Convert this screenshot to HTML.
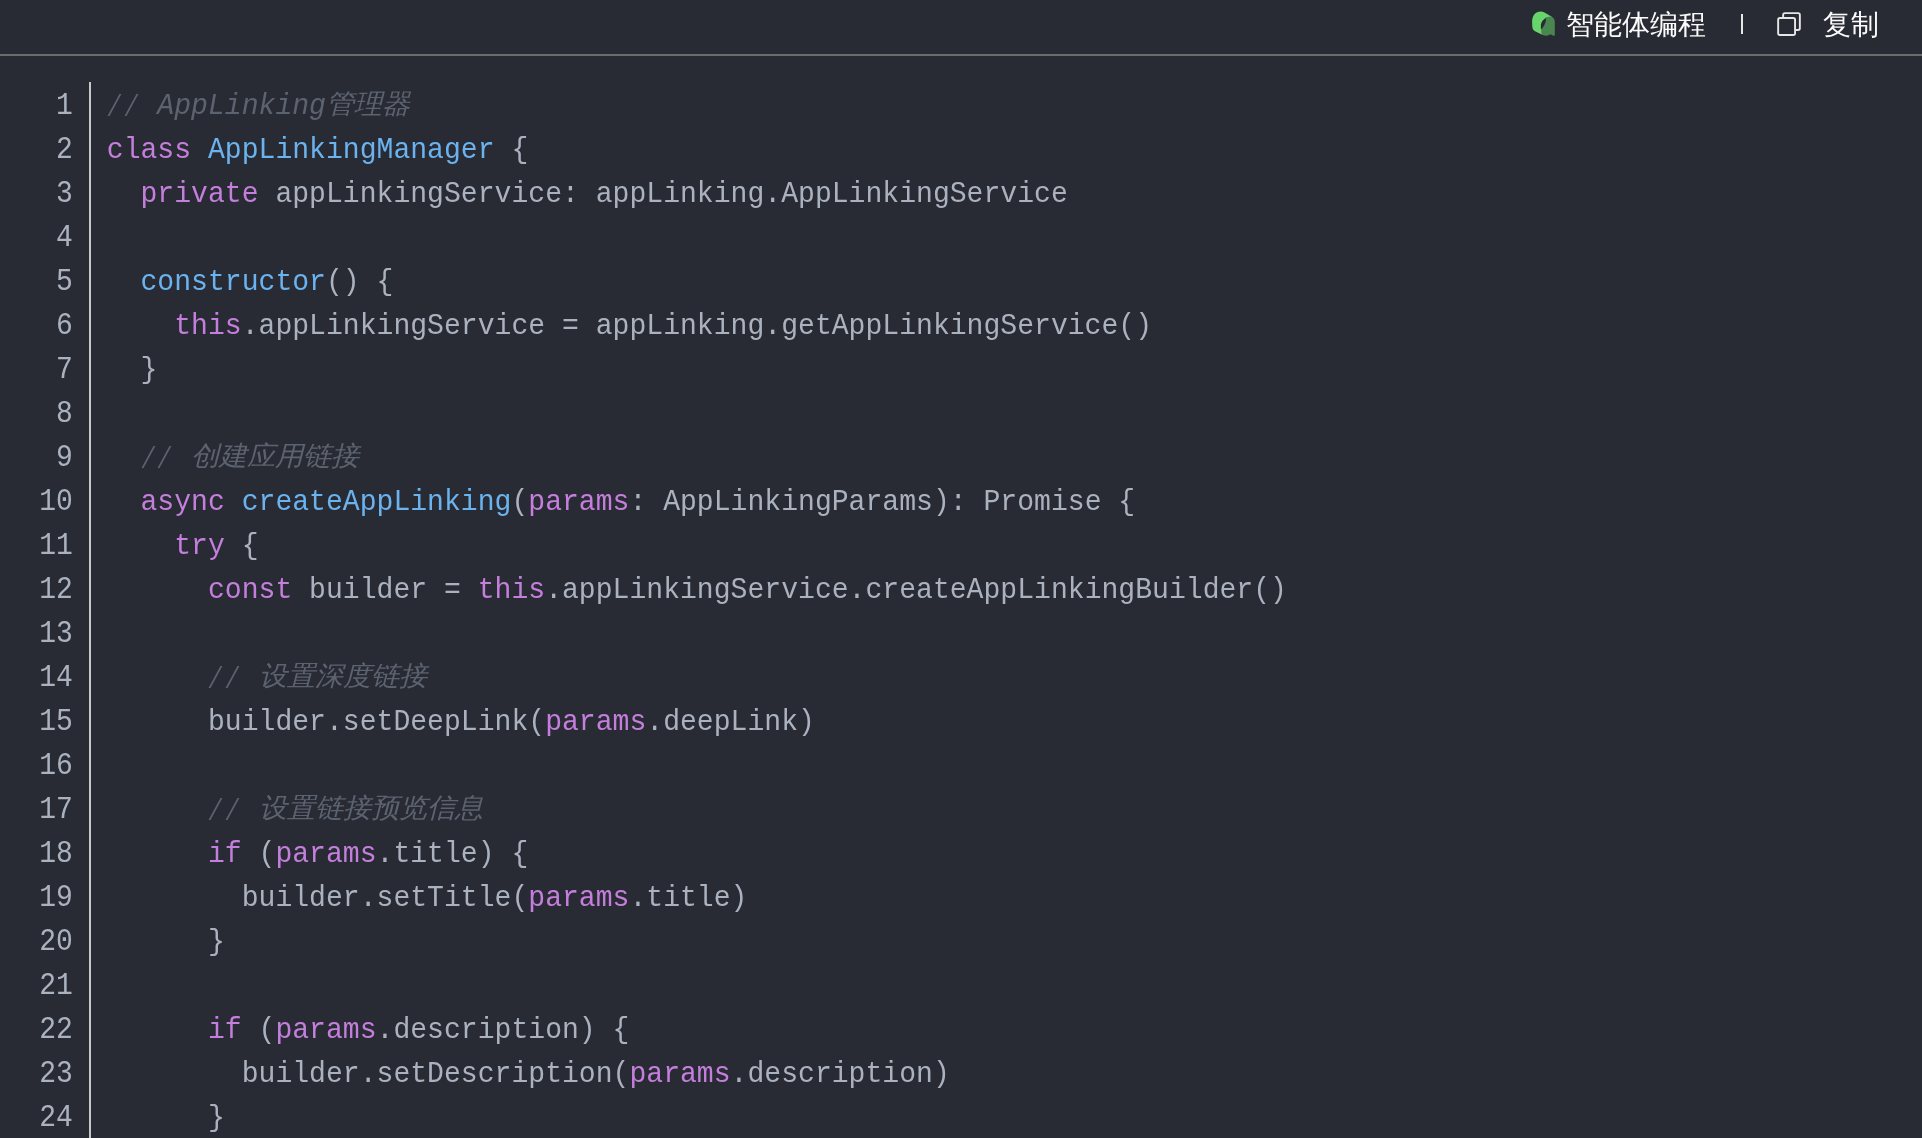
<!DOCTYPE html>
<html><head><meta charset="utf-8">
<style>
html,body{margin:0;padding:0;}
body{width:1922px;height:1138px;overflow:hidden;background:#292b34;font-family:"Liberation Mono",monospace;position:relative;}
#hdr{position:absolute;left:0;top:0;width:1922px;height:54px;border-bottom:2px solid #6b6b6a;box-sizing:content-box;}
.ht{position:absolute;top:4.5px;font-family:"Liberation Sans",sans-serif;font-size:28px;line-height:40px;color:#fbfbfb;white-space:nowrap;}
#gut{position:absolute;left:89px;top:82px;width:2px;height:1100px;background:#c8c8c8;}
.ln{position:absolute;left:0;width:72.8px;text-align:right;font-size:28px;color:#abb2bf;white-space:pre;line-height:44px;transform:scaleY(1.11);transform-origin:0 29.45px;}
.cd{position:absolute;left:106.8px;font-size:28.1px;color:#abb2bf;white-space:pre;line-height:44px;transform:scaleY(1.05);transform-origin:0 29.45px;}
#code,#hdr{will-change:transform}
.k{color:#c47edc}
.f{color:#6ab3ee}
.c{color:#5c6370;font-style:italic}
.sl{display:inline-block;transform:translate(-1.3px,2px) scale(0.78,1.03)}
.cj{display:inline-block;transform:translateY(-1px) scaleY(0.92);transform-origin:0 29.45px}
</style></head><body>
<div id="hdr">
  <svg style="position:absolute;left:1524px;top:4px" width="40" height="40" viewBox="0 0 40 40">
    <path d="M16.9 7.4 C11 7.4 8 12 8.1 18 L8.3 22.5 C8.4 25 9.5 26.5 11 27.2 L18.8 30.9 L18.8 20 L24 13 L27.8 12.9 C27.6 12.7 27.3 12.5 27 12.2 L20 8.2 C19 7.6 18 7.4 16.9 7.4 Z" fill="#68d46c"/>
    <path d="M22.1 13.3 C24 12.9 26 12.6 27.3 12.6 C29.6 13.8 30.8 15.8 30.8 18 L30.8 30.5 C30.8 31.5 30.3 32 29.2 31.7 L26.7 30.2 L24.5 31.3 C23 31.9 21 32 19 31 L17.6 30.2 C17.1 27 17 24 17.6 22 C18.5 18.5 20 15.2 22.1 13.3 Z" fill="#4a864f"/>
    <path d="M22 14.1 C19.8 15.2 17.4 17.5 16.9 20.4 L16.9 25 L17.2 25.3 C19.5 23 21.4 20 21.9 16.5 C22 15.5 22 14.8 22 14.1 Z" fill="#292b34"/>
  </svg>
  <div class="ht" style="left:1566px">智能体编程</div>
  <div style="position:absolute;left:1741px;top:14px;width:2px;height:20px;background:#e6e6e6"></div>
  <svg style="position:absolute;left:1768px;top:4px" width="40" height="40" viewBox="0 0 40 40">
    <rect x="10.15" y="14.05" width="16.9" height="16.9" rx="1.8" fill="none" stroke="#e6e6e6" stroke-width="1.9"/>
    <path d="M15.15 14.05 V10.9 Q15.15 9.15 16.9 9.15 H30.1 Q31.85 9.15 31.85 10.9 V24.3 Q31.85 26.05 30.1 26.05 H27.05" fill="none" stroke="#e6e6e6" stroke-width="1.9"/>
  </svg>
  <div class="ht" style="left:1823px">复制</div>
</div>
<div id="gut"></div>
<div id="code">
<div class="ln" style="top:85.0px">1</div>
<div class="cd" style="top:85.0px"><span class="c"><span class="sl">/</span><span class="sl">/</span> AppLinking<span class="cj">管理器</span></span></div>
<div class="ln" style="top:129.0px">2</div>
<div class="cd" style="top:129.0px"><span class="k">class</span> <span class="f">AppLinkingManager</span> {</div>
<div class="ln" style="top:173.0px">3</div>
<div class="cd" style="top:173.0px">  <span class="k">private</span> appLinkingService: appLinking.AppLinkingService</div>
<div class="ln" style="top:217.0px">4</div>
<div class="cd" style="top:217.0px"></div>
<div class="ln" style="top:261.0px">5</div>
<div class="cd" style="top:261.0px">  <span class="f">constructor</span>() {</div>
<div class="ln" style="top:305.0px">6</div>
<div class="cd" style="top:305.0px">    <span class="k">this</span>.appLinkingService = appLinking.getAppLinkingService()</div>
<div class="ln" style="top:349.0px">7</div>
<div class="cd" style="top:349.0px">  }</div>
<div class="ln" style="top:393.0px">8</div>
<div class="cd" style="top:393.0px"></div>
<div class="ln" style="top:437.0px">9</div>
<div class="cd" style="top:437.0px">  <span class="c"><span class="sl">/</span><span class="sl">/</span> <span class="cj">创建应用链接</span></span></div>
<div class="ln" style="top:481.0px">10</div>
<div class="cd" style="top:481.0px">  <span class="k">async</span> <span class="f">createAppLinking</span>(<span class="k">params</span>: AppLinkingParams): Promise {</div>
<div class="ln" style="top:525.0px">11</div>
<div class="cd" style="top:525.0px">    <span class="k">try</span> {</div>
<div class="ln" style="top:569.0px">12</div>
<div class="cd" style="top:569.0px">      <span class="k">const</span> builder = <span class="k">this</span>.appLinkingService.createAppLinkingBuilder()</div>
<div class="ln" style="top:613.0px">13</div>
<div class="cd" style="top:613.0px"></div>
<div class="ln" style="top:657.0px">14</div>
<div class="cd" style="top:657.0px">      <span class="c"><span class="sl">/</span><span class="sl">/</span> <span class="cj">设置深度链接</span></span></div>
<div class="ln" style="top:701.0px">15</div>
<div class="cd" style="top:701.0px">      builder.setDeepLink(<span class="k">params</span>.deepLink)</div>
<div class="ln" style="top:745.0px">16</div>
<div class="cd" style="top:745.0px"></div>
<div class="ln" style="top:789.0px">17</div>
<div class="cd" style="top:789.0px">      <span class="c"><span class="sl">/</span><span class="sl">/</span> <span class="cj">设置链接预览信息</span></span></div>
<div class="ln" style="top:833.0px">18</div>
<div class="cd" style="top:833.0px">      <span class="k">if</span> (<span class="k">params</span>.title) {</div>
<div class="ln" style="top:877.0px">19</div>
<div class="cd" style="top:877.0px">        builder.setTitle(<span class="k">params</span>.title)</div>
<div class="ln" style="top:921.0px">20</div>
<div class="cd" style="top:921.0px">      }</div>
<div class="ln" style="top:965.0px">21</div>
<div class="cd" style="top:965.0px"></div>
<div class="ln" style="top:1009.0px">22</div>
<div class="cd" style="top:1009.0px">      <span class="k">if</span> (<span class="k">params</span>.description) {</div>
<div class="ln" style="top:1053.0px">23</div>
<div class="cd" style="top:1053.0px">        builder.setDescription(<span class="k">params</span>.description)</div>
<div class="ln" style="top:1097.0px">24</div>
<div class="cd" style="top:1097.0px">      }</div>
</div>
</body></html>
